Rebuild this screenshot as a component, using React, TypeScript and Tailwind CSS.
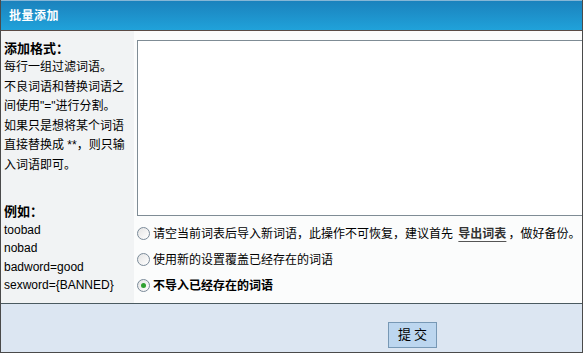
import type React from "react";

const Radio: React.FC<{ checked?: boolean }> = ({ checked = false }) => (
  <span className="inline-flex items-center justify-center w-[13px] h-[13px] rounded-full border border-[#7a8a99] bg-gradient-to-br from-[#e4e4e4] to-[#ffffff] shrink-0">
    {checked && <span className="w-[5px] h-[5px] rounded-full bg-[#2fa12f]" />}
  </span>
);

const rules = [
  "每行一组过滤词语。",
  "不良词语和替换词语之",
  '间使用"="进行分割。',
  "如果只是想将某个词语",
  "直接替换成 **，则只输",
  "入词语即可。",
];

const samples = ["toobad", "nobad", "badword=good", "sexword={BANNED}"];

const App: React.FC = () => {
  return (
    <div
      className="w-[583px] h-[353px] flex flex-col border-x border-b border-[#4a4a4a] bg-white text-[12px] text-black overflow-hidden"
      style={{ fontFamily: '"Liberation Sans", "Noto Sans CJK SC", sans-serif' }}
    >
      {/* Header */}
      <div className="h-[31px] shrink-0 flex items-center px-[8px] bg-gradient-to-b from-[#1b82bd] to-[#20a2da] border-t border-[#86b6d6] border-b border-b-[#5a4a44]">
        <span className="text-white font-bold text-[12px] tracking-[0.5px]">批量添加</span>
      </div>

      {/* Body */}
      <div className="flex-1 grid grid-cols-[133px_1fr]">
        <div className="bg-[#f1f3f4] pl-[3px] pt-[8px] flex flex-col">
          <div className="font-bold text-[13px] leading-[19px]">添加格式：</div>
          {rules.map((r) => (
            <div key={r} className="leading-[19.5px] whitespace-nowrap">
              {r}
            </div>
          ))}
          <div className="mt-[28px] font-bold text-[13px] leading-[18px]">例如：</div>
          {samples.map((s) => (
            <div key={s} className="leading-[18.3px]" style={{ fontFamily: '"Liberation Sans", sans-serif' }}>
              {s}
            </div>
          ))}
        </div>

        <div className="bg-[#fbfcfc] pl-[3px] pt-[9px] flex flex-col">
          <textarea className="block w-full h-[176px] border border-[#7f8c95] border-r-0 bg-white resize-none outline-none" />
          <div className="flex flex-col mt-[9px] gap-[9px]">
            <label className="flex items-center gap-[3px] h-[17px] whitespace-nowrap">
              <Radio />
              <span>
                请空当前词表后导入新词语，此操作不可恢复，建议首先{" "}
                <a className="font-bold text-[#333] underline underline-offset-[3px] decoration-[#555] mx-[2px]">导出词表</a>
                ，做好备份。
              </span>
            </label>
            <label className="flex items-center gap-[3px] h-[17px]">
              <Radio />
              <span>使用新的设置覆盖已经存在的词语</span>
            </label>
            <label className="flex items-center gap-[3px] h-[17px]">
              <Radio checked />
              <span className="font-bold">不导入已经存在的词语</span>
            </label>
          </div>
        </div>
      </div>

      {/* Footer */}
      <div className="h-[49px] shrink-0 border-t border-[#4a5a60] bg-[#dce6f2] flex items-start">
        <button className="ml-[387px] mt-[18px] w-[49px] h-[26px] border border-[#7798b5] bg-[#bcd6ef] text-[13px] tracking-[3px] pl-[3px]">
          提交
        </button>
      </div>
    </div>
  );
};

export default App;
